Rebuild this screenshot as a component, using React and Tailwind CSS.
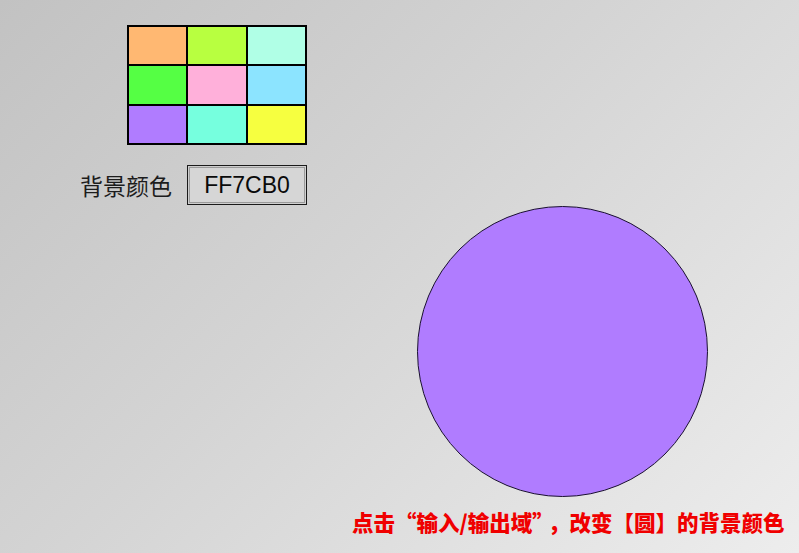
export default function App() {
  const colors = [
    "#FFB872", "#B8FF40", "#B0FFE6",
    "#55FF44", "#FFB0DA", "#8CE4FF",
    "#B07CFF", "#76FFDE", "#F6FF40",
  ];
  return (
    <div className="w-[799px] h-[553px] overflow-hidden flex flex-col bg-[linear-gradient(135deg,#c2c2c2_0%,#d4d4d4_45%,#ededed_100%)] font-['Liberation_Sans','Noto_Sans_CJK_SC',sans-serif]">
      <div className="ml-[127px] mt-[25px] w-[180px] h-[120px] grid grid-cols-3 grid-rows-3 gap-[2px] p-[2px] bg-black">
        {colors.map((c, i) => (
          <div key={i} style={{ backgroundColor: c }} />
        ))}
      </div>
      <div className="flex items-center mt-[20px] ml-[80px]">
        <span className="text-[23px] leading-none text-[#1c1c1c] font-['Noto_Sans_CJK_SC',sans-serif] font-normal">背景颜色</span>
        <div className="ml-[15px] w-[120px] h-[40px] border border-[#1a1a1a] p-[1px]">
          <div className="w-full h-full border border-[#9a9a9a] bg-[#d6d6d6] flex items-center justify-center text-[23px] leading-none text-[#0a0a0a] font-['Liberation_Sans',sans-serif]">
            FF7CB0
          </div>
        </div>
      </div>
      <div className="ml-[417px] mt-[1px] w-[291px] h-[291px] rounded-full border border-[#1a1030] bg-[#B07CFF]" />
      <div className="mt-[14px] ml-[352px] text-[21.5px] leading-none font-black text-[#f00000] font-['Noto_Sans_CJK_SC',sans-serif] whitespace-nowrap">
        <span>点击“输入/输出域”</span>
        <span className="ml-[5px]">，改变【圆】的背景颜色</span>
      </div>
    </div>
  );
}
